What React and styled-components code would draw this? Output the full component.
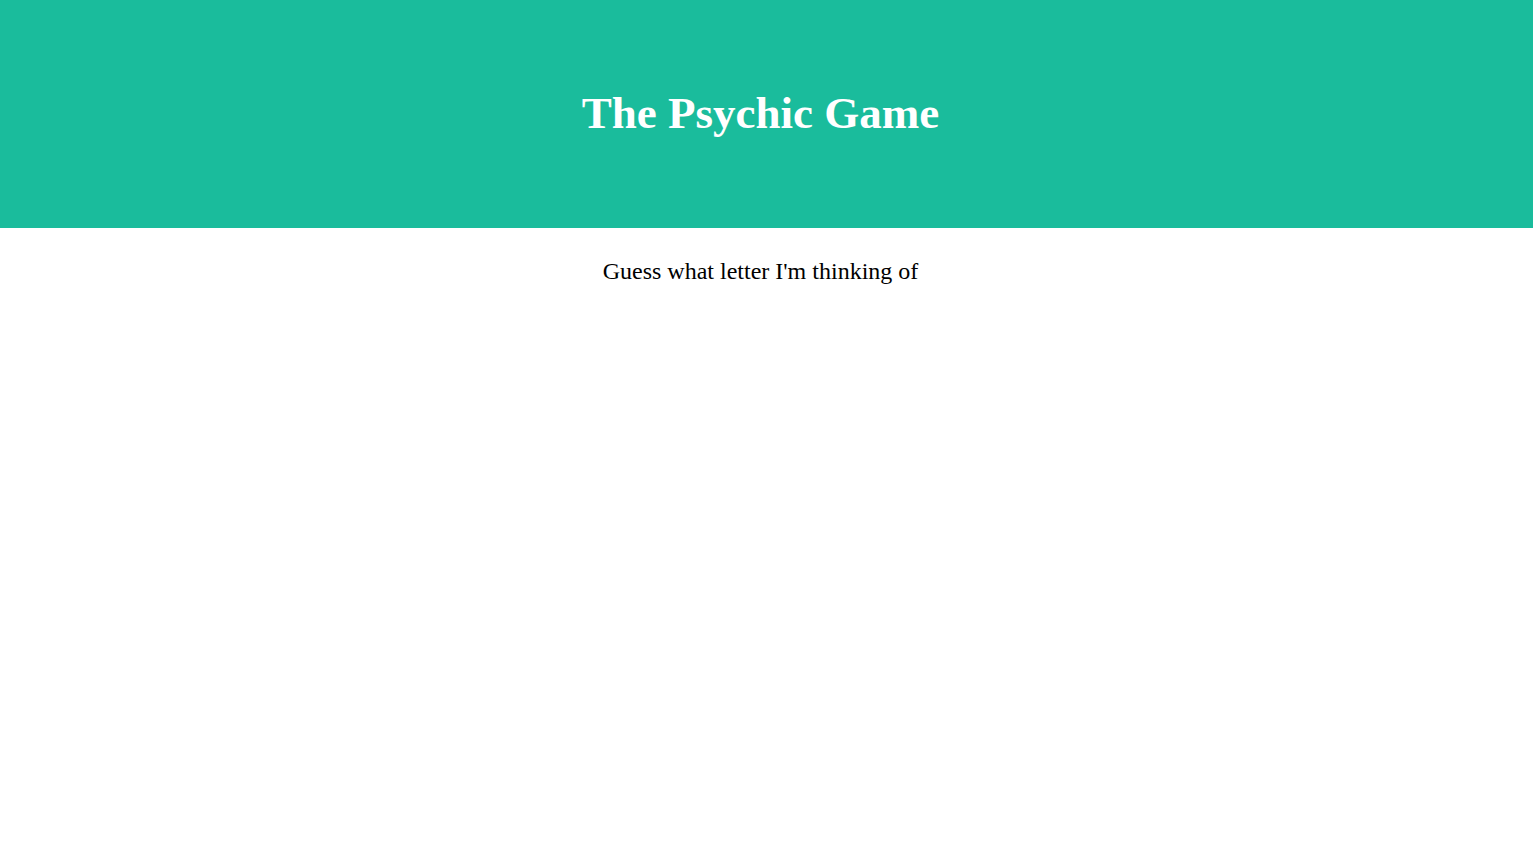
import React from "react";
import styled, { createGlobalStyle } from "styled-components";

const GlobalStyle = createGlobalStyle`
  body {
    margin: 0;
    background: #ffffff;
    font-family: "Liberation Serif", "Times New Roman", serif;
  }
`;

function App() {
  return (
    <Page>
      <GlobalStyle />
      <Header>
        <Title>The Psychic Game</Title>
      </Header>
      <Intro>Guess what letter I'm thinking of</Intro>
    </Page>
  );
}

const Page = styled.div`
  padding-right: 12px;
  text-align: center;
`;

const Header = styled.header`
  background-color: #1abc9c;
  height: 228px;
  display: flex;
  justify-content: center;
  padding-top: 85px;
  box-sizing: border-box;
  margin-right: -12px;
  padding-right: 12px;
`;

const Title = styled.h1`
  margin: 0;
  color: #ffffff;
  font-size: 45px;
  font-weight: bold;
  line-height: 56px;
`;

const Intro = styled.p`
  margin: 29px 0 0;
  color: #000000;
  font-size: 24px;
  line-height: 28px;
`;

export default App;
